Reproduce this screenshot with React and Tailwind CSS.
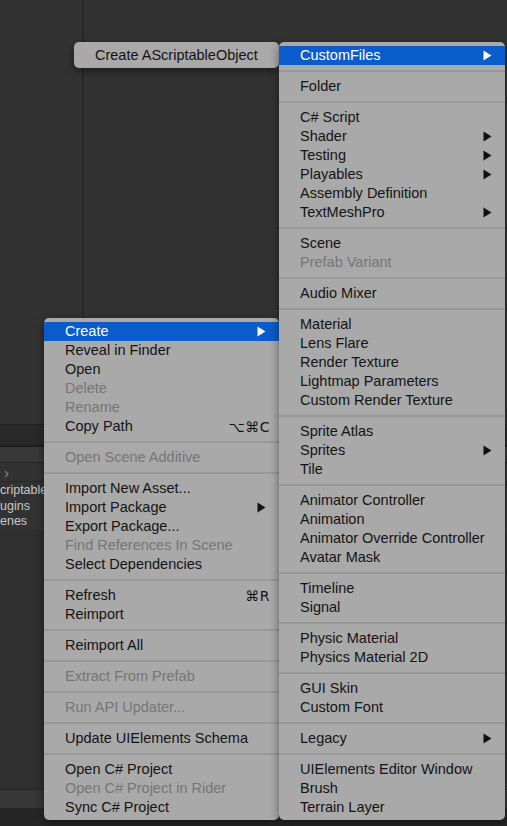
import React from "react";

const Arrow = ({ white }) => (
  <svg width="9" height="11" viewBox="0 0 9 11" className="shrink-0">
    <path d="M0.5 0.5 L8.5 5.5 L0.5 10.5 Z" fill={white ? "#ffffff" : "#111111"} />
  </svg>
);

const leftMenu = [
  [
    { label: "Create", arrow: true, hi: true },
    { label: "Reveal in Finder" },
    { label: "Open" },
    { label: "Delete", dis: true },
    { label: "Rename", dis: true },
    { label: "Copy Path", sc: "⌥⌘C" },
  ],
  [{ label: "Open Scene Additive", dis: true }],
  [
    { label: "Import New Asset..." },
    { label: "Import Package", arrow: true },
    { label: "Export Package..." },
    { label: "Find References In Scene", dis: true },
    { label: "Select Dependencies" },
  ],
  [{ label: "Refresh", sc: "⌘R" }, { label: "Reimport" }],
  [{ label: "Reimport All" }],
  [{ label: "Extract From Prefab", dis: true }],
  [{ label: "Run API Updater...", dis: true }],
  [{ label: "Update UIElements Schema" }],
  [
    { label: "Open C# Project" },
    { label: "Open C# Project in Rider", dis: true },
    { label: "Sync C# Project" },
  ],
];

const rightMenu = [
  [{ label: "CustomFiles", arrow: true, hi: true }],
  [{ label: "Folder" }],
  [
    { label: "C# Script" },
    { label: "Shader", arrow: true },
    { label: "Testing", arrow: true },
    { label: "Playables", arrow: true },
    { label: "Assembly Definition" },
    { label: "TextMeshPro", arrow: true },
  ],
  [{ label: "Scene" }, { label: "Prefab Variant", dis: true }],
  [{ label: "Audio Mixer" }],
  [
    { label: "Material" },
    { label: "Lens Flare" },
    { label: "Render Texture" },
    { label: "Lightmap Parameters" },
    { label: "Custom Render Texture" },
  ],
  [{ label: "Sprite Atlas" }, { label: "Sprites", arrow: true }, { label: "Tile" }],
  [
    { label: "Animator Controller" },
    { label: "Animation" },
    { label: "Animator Override Controller" },
    { label: "Avatar Mask" },
  ],
  [{ label: "Timeline" }, { label: "Signal" }],
  [{ label: "Physic Material" }, { label: "Physics Material 2D" }],
  [{ label: "GUI Skin" }, { label: "Custom Font" }],
  [{ label: "Legacy", arrow: true }],
  [
    { label: "UIElements Editor Window" },
    { label: "Brush" },
    { label: "Terrain Layer" },
  ],
];

function Row({ item }) {
  const color = item.hi
    ? "bg-[#0a5ccc] text-white"
    : item.dis
    ? "text-[#767676]"
    : "text-[#141414]";
  return (
    <div
      className={`h-[19px] flex items-center justify-between pl-[21px] ${
        item.sc ? "pr-[9px]" : "pr-[13px]"
      } leading-none whitespace-nowrap ${color}`}
    >
      <span>{item.label}</span>
      {item.arrow && <Arrow white={item.hi} />}
      {item.sc && (
        <span className="font-['DejaVu_Sans',sans-serif] text-[14px] tracking-[0.5px]">
          {item.sc}
        </span>
      )}
    </div>
  );
}

function Menu({ sections, className }) {
  return (
    <div
      className={`absolute bg-[#a9a9a9] rounded-[5px] pt-[4px] pb-[3px] shadow-[0_3px_10px_rgba(0,0,0,0.45)] ${className}`}
    >
      {sections.map((sec, i) => (
        <div key={i}>
          {i > 0 && (
            <div className="h-[12px] flex items-center">
              <div className="h-[2px] w-full bg-[#989898]" />
            </div>
          )}
          {sec.map((it, j) => (
            <Row key={j} item={it} />
          ))}
        </div>
      ))}
    </div>
  );
}

export default function App() {
  return (
    <div className="relative w-[507px] h-[826px] overflow-hidden bg-[#323232] flex flex-col font-['Liberation_Sans',Arial,sans-serif] text-[14.5px]">
      {/* background editor panels */}
      <div className="h-[424px] flex shrink-0">
        <div className="w-[82px]" />
        <div className="w-[2px] bg-[#262626]" />
        <div className="flex-1" />
      </div>
      <div className="h-[21px] shrink-0 bg-[#292929] border-t border-[#202020]" />
      <div className="h-[2px] shrink-0 bg-[#1e1e1e]" />
      <div className="h-[15px] shrink-0 bg-[#383838]" />
      <div className="h-[1px] shrink-0 bg-[#232323]" />
      <div className="h-[18px] shrink-0 flex items-center pl-[4px] text-[#8a8a8a] text-[15px] leading-none">
        ›
      </div>
      <div className="h-[1px] shrink-0 bg-[#262626]" />
      <div className="flex flex-col text-[#c8c8c8] text-[12.5px] leading-[15.5px] pt-[1px] shrink-0">
        <span>criptable</span>
        <span>ugins</span>
        <span>enes</span>
      </div>
      <div className="flex-1 bg-[#2f2f2f]" />
      <div className="h-[1px] shrink-0 bg-[#242424]" />
      <div className="h-[18px] shrink-0 bg-[#363636]" />
      <div className="h-[18px] shrink-0 bg-[#262626]" />

      {/* menus */}
      <Menu sections={leftMenu} className="left-[44px] top-[318px] w-[235px]" />
      <div className="absolute left-[74px] top-[42px] w-[205px] h-[26px] bg-[#a9a9a9] rounded-[5px] shadow-[0_3px_10px_rgba(0,0,0,0.45)] flex items-center pl-[21px] text-[#141414] leading-none">
        Create AScriptableObject
      </div>
      <Menu sections={rightMenu} className="left-[279px] top-[42px] w-[226px]" />
    </div>
  );
}
